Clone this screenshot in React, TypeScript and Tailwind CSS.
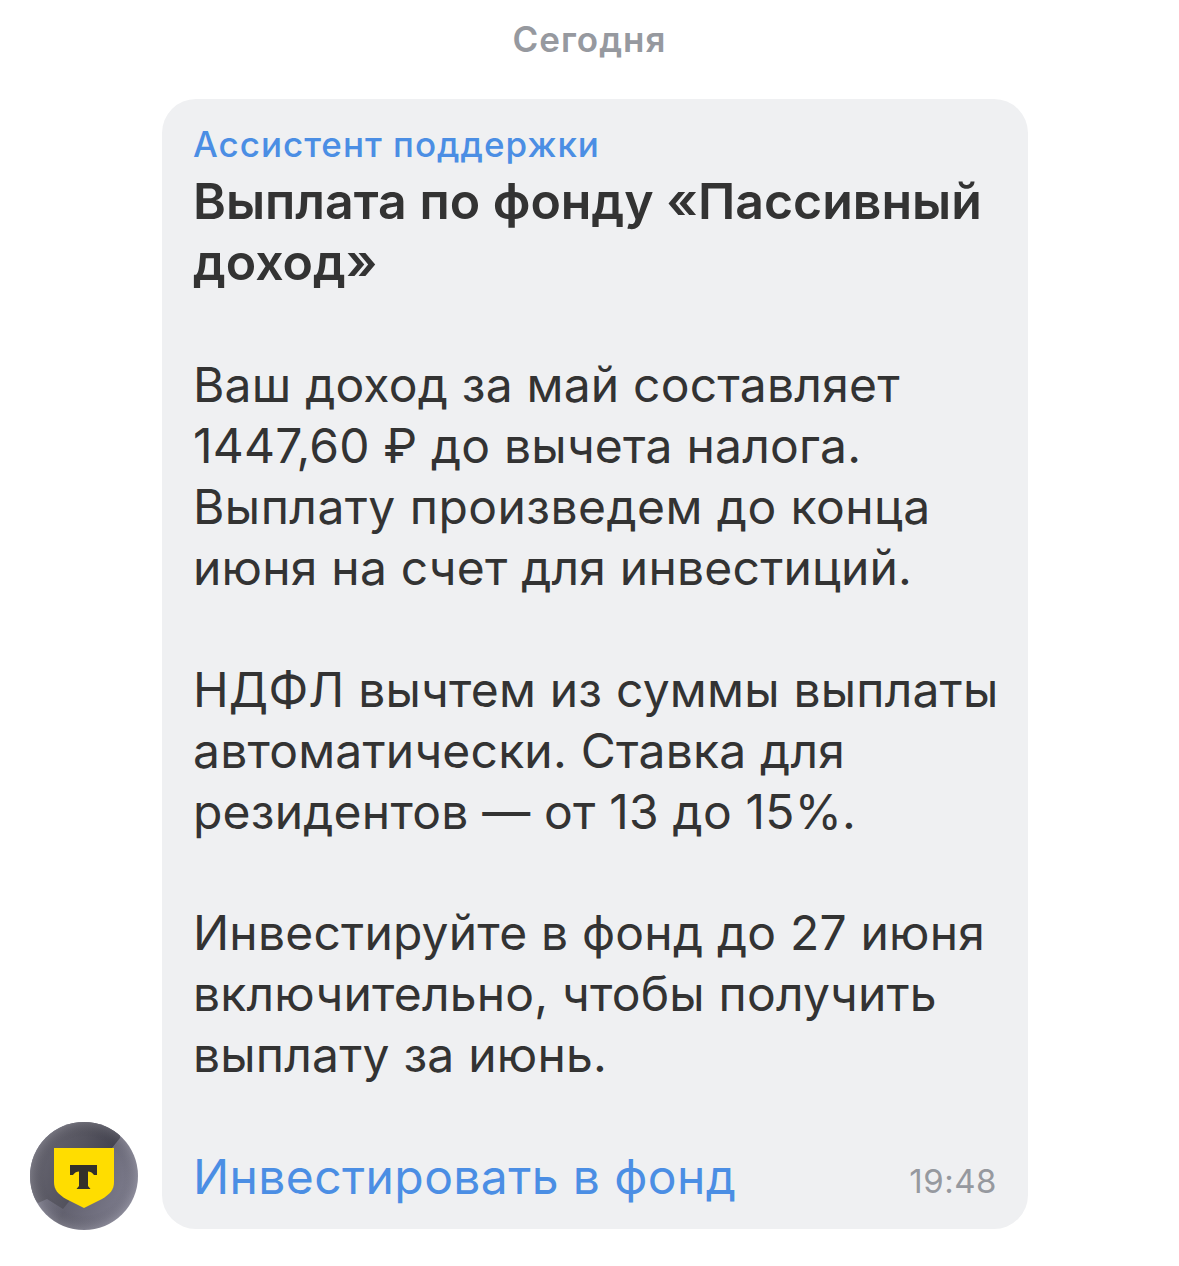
const font = "font-['Inter','Noto_Sans',sans-serif]";

function Avatar() {
  return (
    <div className="mb-[-1px] h-[108px] w-[108px] shrink-0">
      <svg viewBox="0 0 108 108" width="108" height="108">
        <defs>
          <clipPath id="disc">
            <circle cx="54" cy="54" r="54" />
          </clipPath>
          <linearGradient id="base" x1="0" y1="0.3" x2="1" y2="0.7">
            <stop offset="0" stopColor="#8c8b9c" />
            <stop offset="0.45" stopColor="#636270" />
            <stop offset="1" stopColor="#807f90" />
          </linearGradient>
          <linearGradient id="dark" x1="0" y1="0" x2="1" y2="0.35">
            <stop offset="0" stopColor="#6c6b77" />
            <stop offset="0.6" stopColor="#55545f" />
            <stop offset="1" stopColor="#3e3e4b" />
          </linearGradient>
          <radialGradient id="rim" cx="0.5" cy="0.5" r="0.5">
            <stop offset="0.72" stopColor="#000000" stopOpacity="0" />
            <stop offset="1" stopColor="#ffffff" stopOpacity="0.12" />
          </radialGradient>
        </defs>
        <g clipPath="url(#disc)">
          <rect width="108" height="108" fill="url(#base)" />
          <path d="M0 0H92L90 16L33 87L17 77L8 81L0 72Z" fill="url(#dark)" />
          <rect width="108" height="108" fill="url(#rim)" />
        </g>
        <path d="M24 26H84V60C84 68 80 72 72 77L54 86L36 77C28 72 24 68 24 60Z" fill="#ffdd00" />
        <path d="M40 43H67V53H64C62.5 50.5 60 49.5 58 49.5V64L60.5 67H46.5L49 64V49.5C47 49.5 44.5 50.5 43 53H40Z" fill="#33302a" />
      </svg>
    </div>
  );
}

export default function App() {
  return (
    <div className={`${font} h-[1266px] w-[1179px] overflow-hidden bg-white`}>
      <div className="pt-[17px] text-center text-[35px] font-semibold leading-[44px] tracking-[1px] text-[#96999f]">
        Сегодня
      </div>

      <div className="mt-[38px] flex items-end gap-6 pl-[30px]">
        <Avatar />

        <div className="h-[1130px] w-[866px] rounded-[34px] bg-[#eff0f2] px-[31px] pt-[23px]">
          <div className="text-[35px] font-medium leading-[44px] tracking-[1px] text-[#4b8ee4]">
            Ассистент поддержки
          </div>

          <div className="mt-[5px] text-[50px] font-semibold leading-[61px] text-[#333333]">
            <div>Выплата по фонду «Пассивный</div>
            <div>доход»</div>
          </div>

          <div className="mt-[61px] whitespace-nowrap text-[48px] font-normal leading-[61px] tracking-[0.2px] text-[#333333]">
            <div>Ваш доход за май составляет</div>
            <div>1447,60 ₽ до вычета налога.</div>
            <div className="tracking-[0.45px]">Выплату произведем до конца</div>
            <div>июня на счет для инвестиций.</div>
            <div className="h-[61px]" />
            <div>НДФЛ вычтем из суммы выплаты</div>
            <div>автоматически. Ставка для</div>
            <div>резидентов — от 13 до 15%.</div>
            <div className="h-[61px]" />
            <div className="mt-[-1px]">Инвестируйте в фонд до 27 июня</div>
            <div>включительно, чтобы получить</div>
            <div>выплату за июнь.</div>
          </div>

          <div className="mt-[61px] flex items-end justify-between">
            <span className="text-[48px] leading-[61px] tracking-[0.4px] text-[#4b8ee4]">Инвестировать в фонд</span>
            <span className="pb-[4px] text-[33px] leading-[44px] tracking-[0.5px] text-[#96999f]">19:48</span>
          </div>
        </div>
      </div>
    </div>
  );
}
